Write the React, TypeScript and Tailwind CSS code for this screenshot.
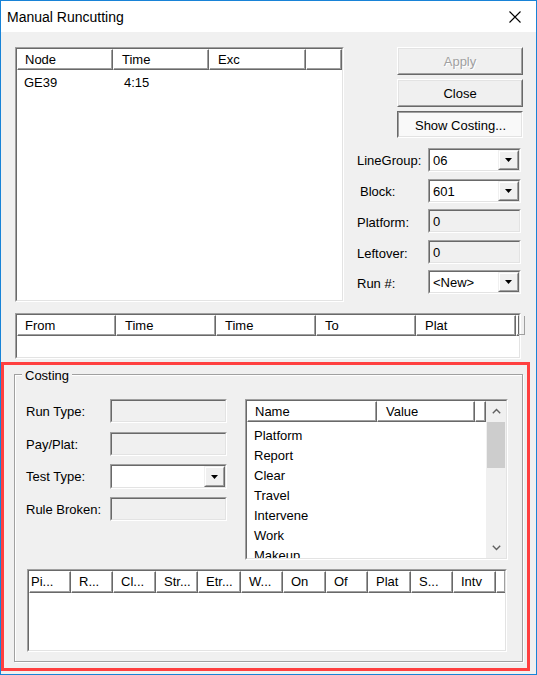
import React from 'react'

type BoxProps = {
  className?: string
  inner?: string
  children?: React.ReactNode
}

// classic 3d sunken frame (listviews, edit boxes)
const Sunken = ({ className = '', inner = '', children }: BoxProps) => (
  <div
    className={`border border-t-[#a0a0a0] border-l-[#a0a0a0] border-r-white border-b-white ${className}`}
  >
    <div
      className={`h-full border border-t-[#696969] border-l-[#696969] border-r-[#e3e3e3] border-b-[#e3e3e3] ${inner}`}
    >
      {children}
    </div>
  </div>
)

const HeaderCell = ({
  label = '',
  width = 'flex-1',
  pad = 'pl-[7px]',
}: {
  label?: string
  width?: string
  pad?: string
}) => (
  <div
    className={`h-full shrink-0 min-w-0 border border-t-white border-l-white border-r-[#696969] border-b-[#696969] ${width}`}
  >
    <div
      className={`h-full border-r border-b border-r-[#a0a0a0] border-b-[#a0a0a0] flex items-center overflow-hidden whitespace-nowrap ${pad}`}
    >
      {label}
    </div>
  </div>
)

const Button = ({
  label,
  disabled = false,
  pressed = false,
  height = 'h-[28px]',
}: {
  label: string
  disabled?: boolean
  pressed?: boolean
  height?: string
}) =>
  pressed ? (
    <div
      className={`w-[126px] ${height} border border-t-[#696969] border-l-[#696969] border-r-white border-b-white`}
    >
      <div className="h-full border border-t-[#a0a0a0] border-l-[#a0a0a0] border-r-[#e3e3e3] border-b-[#e3e3e3] bg-[#f9f9f9] flex items-center justify-center pt-[1px] pl-[1px]">
        {label}
      </div>
    </div>
  ) : (
    <div
      className={`w-[126px] ${height} border border-t-white border-l-white border-r-[#696969] border-b-[#696969]`}
    >
      <div
        className={`h-full border border-t-[#e3e3e3] border-l-[#e3e3e3] border-r-[#a0a0a0] border-b-[#a0a0a0] flex items-center justify-center ${
          disabled ? 'text-[#a0a0a0] [text-shadow:1px_1px_0_#fff]' : ''
        }`}
      >
        {label}
      </div>
    </div>
  )

const DropButton = () => (
  <div className="w-[21px] h-full shrink-0 border border-t-[#f0f0f0] border-l-[#f0f0f0] border-r-[#696969] border-b-[#696969]">
    <div className="h-full border border-t-white border-l-white border-r-[#a0a0a0] border-b-[#a0a0a0] bg-[#f0f0f0] flex items-center justify-center">
      <svg width="7" height="4" viewBox="0 0 7 4">
        <path d="M0 0H7L3.5 4Z" fill="#000" />
      </svg>
    </div>
  </div>
)

const Combo = ({ value = '', className = '' }: { value?: string; className?: string }) => (
  <Sunken className={className} inner="bg-white flex">
    <span className="flex-1 flex items-center pl-[3px]">{value}</span>
    <DropButton />
  </Sunken>
)

const TextBox = ({ value = '', className = '' }: { value?: string; className?: string }) => (
  <Sunken className={className} inner="bg-[#f0f0f0] flex items-center pl-[3px]">
    {value}
  </Sunken>
)

const Chevron = ({ up }: { up?: boolean }) => (
  <svg width="9" height="6" viewBox="0 0 9 6">
    <path
      d={up ? 'M0.8 5.2L4.5 1.5L8.2 5.2' : 'M0.8 0.8L4.5 4.5L8.2 0.8'}
      fill="none"
      stroke="#606060"
      strokeWidth="1.4"
    />
  </svg>
)

const costRows = ['Platform', 'Report', 'Clear', 'Travel', 'Intervene', 'Work', 'Makeup']

const pieceCols = [
  { label: 'Pi...', w: 'w-[42px]', pad: 'pl-[1px]' },
  { label: 'R...', w: 'w-[42px]', pad: 'pl-[7px]' },
  { label: 'Cl...', w: 'w-[43px]', pad: 'pl-[7px]' },
  { label: 'Str...', w: 'w-[42px]', pad: 'pl-[7px]' },
  { label: 'Etr...', w: 'w-[43px]', pad: 'pl-[7px]' },
  { label: 'W...', w: 'w-[42px]', pad: 'pl-[7px]' },
  { label: 'On', w: 'w-[43px]', pad: 'pl-[7px]' },
  { label: 'Of', w: 'w-[42px]', pad: 'pl-[7px]' },
  { label: 'Plat', w: 'w-[43px]', pad: 'pl-[7px]' },
  { label: 'S...', w: 'w-[42px]', pad: 'pl-[7px]' },
  { label: 'Intv', w: 'w-[43px]', pad: 'pl-[7px]' },
]

const Field = ({
  label,
  mt,
  labelClass = '',
  children,
}: {
  label: string
  mt: string
  labelClass?: string
  children: React.ReactNode
}) => (
  <div className={`flex items-center h-[24px] ${mt}`}>
    <span className={`w-[71px] ${labelClass}`}>{label}</span>
    {children}
  </div>
)

const CostLabel = ({ label }: { label: string }) => (
  <span className="w-[84px] shrink-0">{label}</span>
)

const App = () => {
  return (
    <div className="w-[537px] h-[675px] border border-[#1883d7] bg-[#f0f0f0] flex flex-col overflow-hidden text-black text-[13px] leading-[15px] font-['Liberation_Sans',Arial,sans-serif]">
      {/* title bar */}
      <div className="h-[31px] shrink-0 bg-white flex items-center justify-between pl-[6px] pr-[15px]">
        <span className="text-[14px] leading-[16px] pt-[1px]">Manual Runcutting</span>
        <svg width="12" height="12" viewBox="0 0 12 12">
          <path d="M0.5 0.5L11.5 11.5M11.5 0.5L0.5 11.5" stroke="#000" strokeWidth="1.1" />
        </svg>
      </div>

      {/* top area */}
      <div className="flex items-start mt-[15px] ml-[14px]">
        <Sunken className="w-[329px] h-[255px] shrink-0" inner="bg-white flex flex-col">
          <div className="flex h-[21px] shrink-0">
            <HeaderCell label="Node" width="w-[96px]" />
            <HeaderCell label="Time" width="w-[96px]" pad="pl-[8px]" />
            <HeaderCell label="Exc" width="w-[97px]" pad="pl-[8px]" />
            <HeaderCell />
          </div>
          <div className="flex h-[20px] items-center mt-[2px]">
            <span className="w-[96px] pl-[7px]">GE39</span>
            <span className="pl-[11px]">4:15</span>
          </div>
        </Sunken>

        <div className="w-[166px] ml-[13px] flex flex-col">
          <div className="self-end flex flex-col gap-[4px]">
            <Button label="Apply" disabled />
            <Button label="Close" />
            <Button label="Show Costing..." pressed height="h-[27px]" />
          </div>
          <Field label="LineGroup:" mt="mt-[10px]">
            <Combo value="06" className="w-[93px] h-[24px]" />
          </Field>
          <Field label="Block:" mt="mt-[7px]" labelClass="pl-[3px]">
            <Combo value="601" className="w-[93px] h-[24px]" />
          </Field>
          <Field label="Platform:" mt="mt-[6px]" labelClass="pt-[2px]">
            <TextBox value="0" className="w-[93px] h-[24px]" />
          </Field>
          <Field label="Leftover:" mt="mt-[7px]" labelClass="pt-[3px]">
            <TextBox value="0" className="w-[93px] h-[24px]" />
          </Field>
          <Field label="Run #:" mt="mt-[6px]" labelClass="pt-[3px]">
            <Combo value="<New>" className="w-[93px] h-[24px]" />
          </Field>
        </div>
      </div>

      {/* trips list */}
      <Sunken className="w-[506px] h-[46px] mt-[11px] ml-[14px] shrink-0" inner="bg-white">
        <div className="flex h-[21px]">
          <HeaderCell label="From" width="w-[99px]" />
          <HeaderCell label="Time" width="w-[100px]" pad="pl-[8px]" />
          <HeaderCell label="Time" width="w-[100px]" pad="pl-[8px]" />
          <HeaderCell label="To" width="w-[100px]" pad="pl-[8px]" />
          <HeaderCell label="Plat" width="w-[100px]" pad="pl-[8px]" />
          <HeaderCell />
        </div>
      </Sunken>

      {/* highlighted costing area */}
      <div className="w-[529px] h-[309px] mt-[3px] shrink-0 border-[3px] border-[#ff4040]">
        <div className="relative ml-[10px] mt-[9px] w-[509px] h-[288px] border border-[#a0a0a0] shadow-[inset_1px_1px_0_#fff,1px_1px_0_#fff] pt-[24px] pl-[11px] flex flex-col">
          <span className="absolute left-[7px] top-[-7px] px-[3px] bg-[#f0f0f0]">Costing</span>

          <div className="flex h-[161px] shrink-0">
            <div className="w-[201px] shrink-0 flex flex-col">
              <div className="flex items-center h-[24px]">
                <CostLabel label="Run Type:" />
                <TextBox className="w-[117px] h-[24px]" />
              </div>
              <div className="flex items-center h-[24px] mt-[9px]">
                <CostLabel label="Pay/Plat:" />
                <TextBox className="w-[117px] h-[24px]" />
              </div>
              <div className="flex items-center h-[25px] mt-[8px]">
                <CostLabel label="Test Type:" />
                <Combo className="w-[117px] h-[25px]" />
              </div>
              <div className="flex items-center h-[24px] mt-[8px]">
                <CostLabel label="Rule Broken:" />
                <TextBox className="w-[117px] h-[24px]" />
              </div>
            </div>

            <Sunken className="w-[263px] h-full ml-[18px] shrink-0" inner="bg-white flex overflow-hidden">
              <div className="flex-1 min-w-0 flex flex-col">
                <div className="flex h-[21px] shrink-0">
                  <HeaderCell label="Name" width="w-[130px]" />
                  <HeaderCell label="Value" width="w-[98px]" pad="pl-[8px]" />
                  <HeaderCell />
                </div>
                <div className="pt-[3px] flex flex-col">
                  {costRows.map((r) => (
                    <div key={r} className="h-[20px] shrink-0 flex items-center pl-[7px]">
                      {r}
                    </div>
                  ))}
                </div>
              </div>
              <div className="w-[20px] shrink-0 bg-[#f0f0f0] flex flex-col">
                <div className="h-[20px] flex items-center justify-center">
                  <Chevron up />
                </div>
                <div className="h-[46px] mt-[1px] mx-[1px] bg-[#cdcdcd]" />
                <div className="flex-1" />
                <div className="h-[20px] flex items-center justify-center">
                  <Chevron />
                </div>
              </div>
            </Sunken>
          </div>

          <Sunken className="w-[480px] h-[83px] mt-[9px] ml-[1px] shrink-0" inner="bg-white">
            <div className="flex h-[22px]">
              {pieceCols.map((c) => (
                <HeaderCell key={c.label} label={c.label} width={c.w} pad={c.pad} />
              ))}
              <HeaderCell />
            </div>
          </Sunken>
        </div>
      </div>
    </div>
  )
}

export default App
